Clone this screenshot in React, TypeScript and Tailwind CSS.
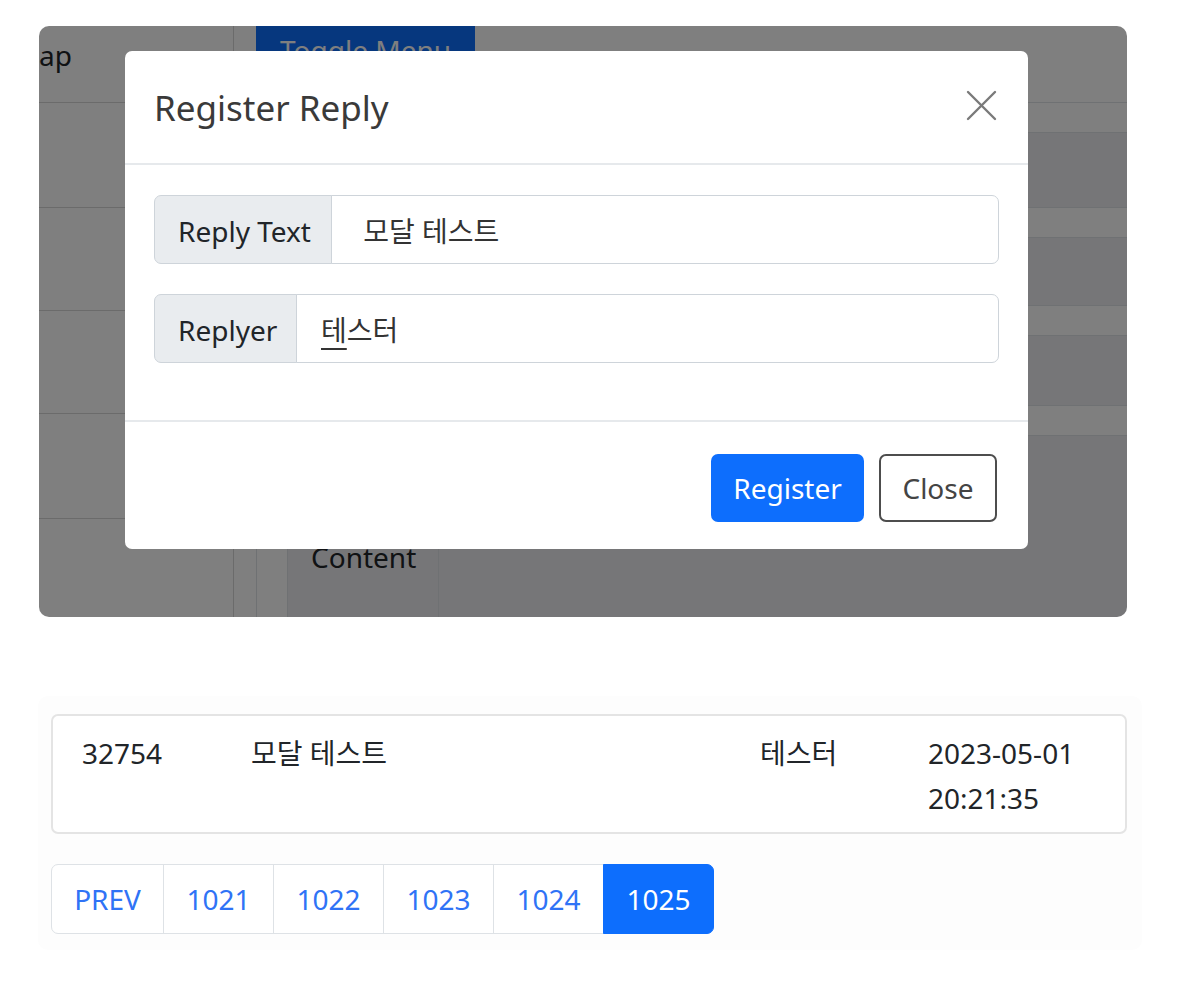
export default function App() {
  const font = "font-['Noto_Sans','Noto_Sans_CJK_KR',sans-serif]";
  return (
    <div className={`min-h-[1008px] w-[1195px] bg-white pt-[26px] ${font}`}>
      {/* Top: modal over page */}
      <div className="relative ml-[39px] h-[591px] w-[1088px] overflow-hidden rounded-[10px]">
        <div className="flex h-full">
          <aside className="flex w-[195px] flex-col border-r border-[#d6d6d6] bg-white">
            <div className="h-[77px] border-b border-[#d6d6d6] pt-[8px] text-[28px] leading-[42px] text-[#212529]">ap</div>
            <div className="h-[105px] border-b border-[#d6d6d6]" />
            <div className="h-[103px] border-b border-[#d6d6d6]" />
            <div className="h-[103px] border-b border-[#d6d6d6]" />
            <div className="h-[105px] border-b border-[#d6d6d6]" />
            <div className="flex-1" />
          </aside>
          <main className="flex flex-1 flex-col">
            <header className="h-[77px] border-b border-[#dee2e6] bg-white pl-[22px]">
              <div className="-mt-[9px] flex h-[66px] w-[219px] items-center justify-center rounded-[7px] bg-[#0d6efd] text-[28px] text-white">
                Toggle Menu
              </div>
            </header>
            <div className="flex flex-1">
              <div className="w-[22px] bg-white" />
              <div className="w-[32px] border-x border-[#dee2e6] bg-white" />
              <div className="flex flex-1 flex-col bg-[#ececf0]">
                <div className="h-[30px] border-b border-[#dee2e6] bg-white" />
                <div className="h-[75px] border-b border-[#dee2e6]" />
                <div className="h-[30px] border-b border-[#dee2e6] bg-white" />
                <div className="h-[68px] border-b border-[#dee2e6]" />
                <div className="h-[30px] border-b border-[#dee2e6] bg-white" />
                <div className="h-[70px] border-b border-[#dee2e6]" />
                <div className="h-[30px] border-b border-[#dee2e6] bg-white" />
                <div className="flex flex-1">
                  <div className="w-[151px] border-r border-[#dee2e6] pl-[23px] pt-[100px] text-[28px] leading-[42px] text-[#212529]">
                    Content
                  </div>
                </div>
              </div>
            </div>
          </main>
        </div>
        <div className="absolute inset-0 bg-black/50" />

        {/* Modal */}
        <div className="absolute left-[86px] top-[25px] flex h-[498px] w-[903px] flex-col rounded-[7px] bg-white">
          <div className="flex h-[114px] items-center justify-between border-b-2 border-[#e6e9ec] pl-[29px] pr-[31px]">
            <h5 className="pt-[3px] text-[35px] leading-[1.5] text-[#3a3a3a]">Register Reply</h5>
            <svg width="31" height="31" viewBox="0 0 31 31" className="mt-[-3px]">
              <path d="M2 2 L29 29 M29 2 L2 29" stroke="#7a7a7a" strokeWidth="2.4" strokeLinecap="round" fill="none" />
            </svg>
          </div>
          <div className="flex flex-col gap-[30px] px-[29px] pb-[57px] pt-[30px]">
            <div className="flex h-[69px]">
              <div className="flex w-[178px] items-center rounded-l-[7px] border border-[#ced4da] bg-[#e9ecef] pl-[23px] pt-[3px] text-[28px] text-[#212529]">
                Reply Text
              </div>
              <div className="-ml-px flex flex-1 items-center whitespace-pre rounded-r-[7px] border border-[#ced4da] pl-[24px] pt-[2px] text-[28px] text-[#333]">
                {" 모달 테스트"}
              </div>
            </div>
            <div className="flex h-[69px]">
              <div className="flex w-[143px] items-center rounded-l-[7px] border border-[#ced4da] bg-[#e9ecef] pl-[23px] pt-[3px] text-[28px] text-[#212529]">
                Replyer
              </div>
              <div className="-ml-px flex flex-1 items-center rounded-r-[7px] border border-[#ced4da] pl-[24px] pt-[2px] text-[28px] text-[#333]">
                <span className="underline decoration-[1.5px] underline-offset-[7px]">테</span>
                <span>스터</span>
              </div>
            </div>
          </div>
          <div className="flex flex-1 items-center justify-end gap-[15px] border-t-2 border-[#e6e9ec] pr-[31px] pt-[4px]">
            <button className="flex h-[68px] w-[153px] items-center justify-center rounded-[7px] bg-[#0d6efd] text-[28px] text-white">
              Register
            </button>
            <button className="flex h-[68px] w-[118px] items-center justify-center rounded-[7px] border-2 border-[#4d4d4d] bg-white text-[28px] text-[#444]">
              Close
            </button>
          </div>
        </div>
      </div>

      {/* Bottom: reply list and pagination */}
      <div className="ml-[38px] mt-[79px] h-[254px] w-[1104px] rounded-[10px] bg-[#fdfdfd] pl-[13px] pt-[18px]">
        <div className="grid h-[120px] w-[1076px] grid-cols-[169px_509px_168px_1fr] rounded-[7px] border-2 border-[#e4e4e4] bg-white pl-[29px] pt-[15px] text-[28px] leading-[45px] text-[#212529]">
          <div>32754</div>
          <div>모달 테스트</div>
          <div>테스터</div>
          <div>
            2023-05-01
            <br />
            20:21:35
          </div>
        </div>
        <div className="mt-[30px] flex h-[70px] text-[28px]">
          <div className="flex w-[113px] items-center justify-center rounded-l-[7px] border border-[#dee2e6] bg-white text-[#2f73f6]">PREV</div>
          {["1021", "1022", "1023", "1024"].map((n) => (
            <div key={n} className="-ml-px flex w-[111px] items-center justify-center border border-[#dee2e6] bg-white text-[#2f73f6]">
              {n}
            </div>
          ))}
          <div className="-ml-px flex w-[111px] items-center justify-center rounded-r-[7px] border border-[#0d6efd] bg-[#0d6efd] text-white">1025</div>
        </div>
      </div>
    </div>
  );
}
